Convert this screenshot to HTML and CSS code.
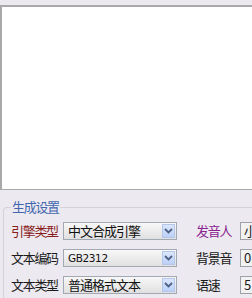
FILE: index.html
```html
<!DOCTYPE html>
<html>
<head>
<meta charset="utf-8">
<link rel="stylesheet" href="styles.css">
</head>
<body>
<div class="page">
  <div class="editor"></div>
  <fieldset class="group">
    <legend class="legend">生成设置</legend>
    <div class="grid">
      <span class="label red">引擎类型</span>
      <div class="combo"><span class="val">中文合成引擎</span><span class="btn"><svg width="9" height="6" viewBox="0 0 9 6"><path d="M1 1 L4.5 4.5 L8 1" fill="none" stroke="#4d6185" stroke-width="1.8"/></svg></span></div>
      <span class="label r purple">发音人</span>
      <div class="box">小</div>

      <span class="label">文本编码</span>
      <div class="combo"><span class="val small">GB2312</span><span class="btn"><svg width="9" height="6" viewBox="0 0 9 6"><path d="M1 1 L4.5 4.5 L8 1" fill="none" stroke="#4d6185" stroke-width="1.8"/></svg></span></div>
      <span class="label r">背景音</span>
      <div class="box">0</div>

      <span class="label">文本类型</span>
      <div class="combo"><span class="val">普通格式文本</span><span class="btn"><svg width="9" height="6" viewBox="0 0 9 6"><path d="M1 1 L4.5 4.5 L8 1" fill="none" stroke="#4d6185" stroke-width="1.8"/></svg></span></div>
      <span class="label r">语速</span>
      <div class="box">5</div>
    </div>
  </fieldset>
</div>
</body>
</html>
```
FILE: styles.css
```css
html, body {
  margin: 0;
  padding: 0;
  background: #eceaf0;
  overflow: hidden;
  width: 252px;
  height: 298px;
}
.page {
  padding-top: 5px;
  font-family: "Noto Sans CJK SC", "Noto Sans", sans-serif;
  font-size: 13px;
  color: #1a1a1a;
}
.editor {
  width: 270px;
  height: 182px;
  background: #ffffff;
  border-top: 2px solid #a9a9a9;
  border-left: 2px solid #a9a9a9;
  border-bottom: 1px solid #a9a9a9;
}
.group {
  margin: 10px 0 0 3px;
  padding: 8px 0 10px 7px;
  border: 1px solid #d3d2d8;
  border-right: none;
  border-radius: 4px 0 0 4px;
  width: 260px;
  box-sizing: border-box;
}
.legend {
  padding: 0 1px;
  font-size: 13px;
  line-height: 14px;
  letter-spacing: -1.3px;
  color: #4266ad;
}
.grid {
  display: grid;
  grid-template-columns: 52px 114px 63px 40px;
  grid-auto-rows: 18px;
  row-gap: 9px;
  align-items: center;
}
.label {
  font-size: 13px;
  line-height: 14px;
  letter-spacing: -1.3px;
  white-space: nowrap;
}
.label.r { padding-left: 19px; }
.red { color: #8a1c1c; }
.purple { color: #8b2290; }
.combo {
  height: 18px;
  box-sizing: border-box;
  border: 1px solid #a3a9b3;
  background: linear-gradient(#f8f8f8, #e0e0e0);
  display: flex;
  align-items: center;
  justify-content: space-between;
  padding: 0 1px 0 4px;
  overflow: hidden;
}
.val {
  font-size: 13px;
  line-height: 14px;
  letter-spacing: -1px;
  color: #111;
  white-space: nowrap;
}
.val.small {
  font-family: "DejaVu Sans", sans-serif;
  font-size: 10.5px;
  letter-spacing: -0.4px;
}
.btn {
  width: 13px;
  height: 14px;
  flex: none;
  box-sizing: border-box;
  border: 1px solid #b4c6ea;
  background: linear-gradient(#dbe6fd, #bcd0f7);
  display: flex;
  align-items: center;
  justify-content: center;
}
.box {
  height: 18px;
  box-sizing: border-box;
  border: 1px solid #9ea2a8;
  background: #f2f2f2;
  padding-left: 3px;
  font-size: 13px;
  line-height: 16px;
  width: 40px;
}
```
